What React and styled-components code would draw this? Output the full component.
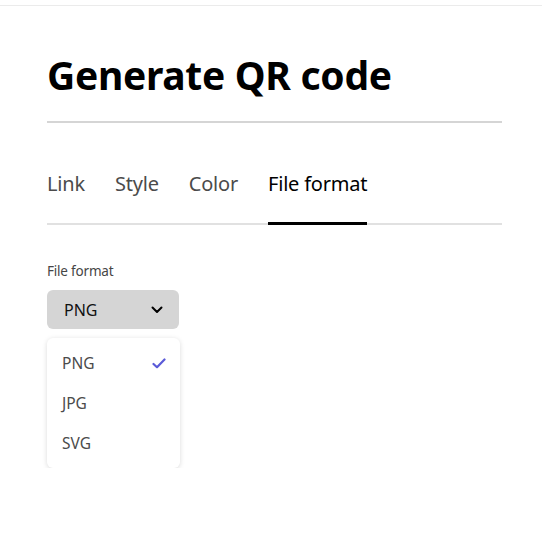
import React from 'react'
import styled, { createGlobalStyle } from 'styled-components'

const GlobalStyle = createGlobalStyle`
  html, body {
    margin: 0;
    padding: 0;
    background: #fff;
  }
  body {
    font-family: 'Noto Sans', 'Open Sans', sans-serif;
    color: #222;
  }
`

const PageUI = styled('div')`
  border-top: 1px solid #ebebeb;
  margin-top: 5px;
  padding: 44px 40px 0 47px;
  width: 542px;
  box-sizing: border-box;
`

const TitleUI = styled('h1')`
  margin: 0;
  padding-bottom: 21px;
  border-bottom: 2px solid #d5d5d5;
  font-size: 39px;
  font-weight: 700;
  line-height: 50px;
  color: #000;
  letter-spacing: -0.3px;
`

const TabsUI = styled('div')`
  display: flex;
  gap: 30px;
  margin-top: 46px;
  border-bottom: 2px solid #e1e1e1;
`

const TabUI = styled('div')`
  font-size: 20px;
  line-height: 30px;
  padding-bottom: 23px;
  margin-bottom: -2px;
  color: ${({ $active }) => ($active ? '#000' : '#4b4b4b')};
  border-bottom: 3px solid ${({ $active }) => ($active ? '#000' : 'transparent')};
  letter-spacing: -0.2px;
`

const FieldUI = styled('div')`
  margin-top: 37px;
  width: 133px;
`

const LabelUI = styled('div')`
  font-size: 13.5px;
  line-height: 18px;
  color: #464646;
  margin-bottom: 10px;
  letter-spacing: -0.2px;
`

const PickerUI = styled('button')`
  display: flex;
  align-items: center;
  justify-content: space-between;
  width: 132px;
  height: 39px;
  padding: 0 16px 0 17px;
  border: 0;
  border-radius: 6px;
  background: #d5d5d5;
  font-family: inherit;
  font-size: 16px;
  color: #111;
  box-sizing: border-box;
`

const MenuUI = styled('ul')`
  list-style: none;
  margin: 9px 0 0;
  padding: 5px 0;
  width: 133px;
  box-sizing: border-box;
  background: #fff;
  border-radius: 6px;
  box-shadow: 0 1px 5px rgba(0, 0, 0, 0.15);
`

const ItemUI = styled('li')`
  display: flex;
  align-items: center;
  justify-content: space-between;
  height: 40px;
  padding: 0 14px 0 15px;
  font-size: 15.5px;
  color: #4b4b4b;
`

const Chevron = () => (
  <svg width="12" height="8" viewBox="0 0 12 8">
    <path
      d="M1.5 1.5 L6 6 L10.5 1.5"
      fill="none"
      stroke="#000"
      strokeWidth="2"
      strokeLinecap="round"
      strokeLinejoin="round"
    />
  </svg>
)

const Check = () => (
  <svg width="14" height="11" viewBox="0 0 14 11">
    <path
      d="M1.5 6 L5 9.2 L12.5 1.5"
      fill="none"
      stroke="#5a5ad8"
      strokeWidth="2.2"
      strokeLinecap="round"
      strokeLinejoin="round"
    />
  </svg>
)

const tabs = ['Link', 'Style', 'Color', 'File format']
const formats = ['PNG', 'JPG', 'SVG']

export default function App() {
  return (
    <>
      <GlobalStyle />
      <PageUI>
        <TitleUI>Generate QR code</TitleUI>
        <TabsUI>
          {tabs.map((tab) => (
            <TabUI key={tab} $active={tab === 'File format'}>
              {tab}
            </TabUI>
          ))}
        </TabsUI>
        <FieldUI>
          <LabelUI>File format</LabelUI>
          <PickerUI type="button" aria-label="toggle menu">
            <span>PNG</span>
            <Chevron />
          </PickerUI>
          <MenuUI>
            {formats.map((f) => (
              <ItemUI key={f}>
                <span>{f}</span>
                {f === 'PNG' && <Check />}
              </ItemUI>
            ))}
          </MenuUI>
        </FieldUI>
      </PageUI>
    </>
  )
}
